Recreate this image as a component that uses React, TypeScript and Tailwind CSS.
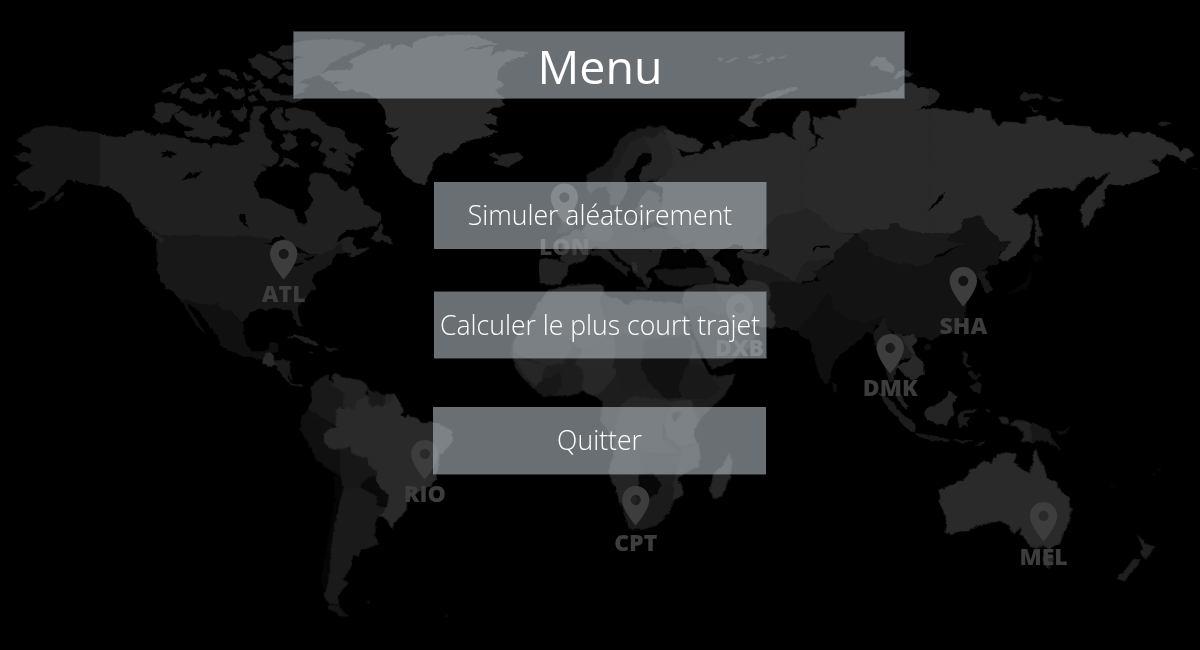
type Shape = [fill: string, points: string];

const THIRD = 'scale(0.33333)';

const northAmerica: Shape[] = [
  ['#181818', '145,315 165,320 190,322 225,330 250,335 275,335 302,342 302,497 275,492 255,490 230,482 222,488 210,478 200,480 185,495 178,510 150,535 130,548 110,560 90,570 85,568 105,555 125,543 140,525 135,515 110,512 90,512 80,500 65,495 55,480 52,468 65,458 75,450 92,445 100,435 85,425 60,422 40,410 55,402 75,398 95,398 92,385 75,378 65,370 50,360 70,352 80,340 100,328 120,322'],
  ['#181818', '163,540 172,527 188,515 184,530 174,542'],
  ['#181818', '42,493 52,492 54,499 44,499'],
  // United States
  ['#181818', '472,640 770,640 795,655 850,665 890,685 920,705 950,705 990,680 1010,668 1025,665 1038,695 1010,700 998,715 995,730 970,745 950,755 940,770 935,780 947,805 930,815 915,835 900,850 890,870 895,890 905,915 898,920 885,900 875,870 860,865 845,868 825,862 800,870 780,865 755,875 735,895 730,910 715,900 705,885 690,872 670,875 650,855 630,858 600,855 560,840 540,838 520,815 500,805 485,785 475,760 472,720 470,690'],
  // Mexico
  ['#101010', '540,838 560,840 600,853 630,856 650,853 670,873 690,870 715,900 730,910 730,945 740,975 755,995 785,995 805,985 812,968 835,968 828,995 810,1000 795,1020 770,1015 740,1012 710,1000 685,990 660,975 655,950 630,920 610,890 595,870 575,858 562,850 570,870 590,900 605,925 614,940 602,932 580,900 560,870 550,855'],
  ['#2a2a2a', '790,1018 797,1000 812,998 820,1010 822,1022 838,1028 828,1038 805,1036 788,1030'],
  ['#1b1b1b', '822,1024 850,1020 872,1026 868,1050 862,1075 880,1090 908,1095 905,1099 880,1096 860,1082 845,1062 828,1038'],
  // Canada
  ['#202020', '300,342 320,345 345,352 370,350 390,340 410,332 430,328 440,342 460,345 480,340 500,345 530,350 555,355 575,368 600,370 625,368 632,387 640,372 665,370 690,378 715,372 745,362 735,350 745,335 760,330 750,310 755,285 760,260 790,258 800,268 785,280 775,300 790,315 788,335 800,345 806,360 820,365 812,385 830,402 838,412 828,428 812,440 775,432 800,442 795,450 775,465 762,485 762,505 775,520 785,535 810,538 830,550 850,560 880,570 888,590 895,610 910,617 922,605 920,590 912,575 928,562 940,545 940,530 925,512 925,500 932,485 930,465 945,458 970,462 990,470 1005,482 1015,505 1035,518 1050,505 1062,497 1075,515 1085,535 1092,550 1120,572 1140,580 1146,600 1130,615 1100,622 1070,630 1040,632 1020,645 1005,665 1025,660 1045,650 1062,655 1055,670 1070,685 1085,688 1060,700 1040,698 1030,690 1025,668 1008,672 995,690 960,702 930,702 900,685 870,670 820,660 780,650 750,647 485,647 470,637 440,620 425,605 405,585 395,560 375,535 360,520 345,510 325,500 300,495'],
  ['#202020', '432,622 452,627 472,642 490,660 486,670 468,655 450,635'],
  ['#202020', '1115,655 1128,635 1143,612 1149,622 1143,640 1165,650 1170,657 1178,672 1165,670 1150,662 1130,665'],
  ['#202020', '1048,708 1065,690 1105,683 1085,698 1060,713'],
  // Arctic islands
  ['#202020', '465,250 485,250 515,250 550,262 540,272 520,282 505,305 485,310 470,300 456,290 470,275'],
  ['#202020', '525,285 550,272 570,285 590,290 605,280 610,297 622,290 628,268 636,300 655,268 662,290 648,305 662,320 697,332 690,345 660,350 640,350 620,358 590,352 560,347 548,335 590,325 560,318 535,308'],
  ['#202020', '545,215 560,205 580,222 605,225 620,220 612,203 630,210 645,225 655,220 652,235 620,236 605,248 580,245 565,235 540,235'],
  ['#202020', '485,213 510,200 530,190 552,190 540,202 528,215 518,222 505,212 488,220'],
  ['#202020', '570,178 590,168 612,163 618,170 600,188 580,185'],
  ['#202020', '655,150 675,148 692,152 710,165 715,180 695,175 680,165 660,162'],
  ['#202020', '670,205 690,200 710,212 730,205 735,230 720,238 700,228 680,216'],
  ['#202020', '745,118 762,115 775,100 800,110 825,125 845,145 835,160 815,175 790,165 770,145 755,137'],
  ['#202020', '803,95 830,93 845,80 860,77 885,77 885,115 860,118 835,115 812,108'],
  ['#202020', '775,205 810,208 820,218 850,225 880,230 912,236 900,245 860,243 800,240 785,228'],
  ['#202020', '728,160 750,165 762,175 745,182 735,175'],
  ['#202020', '745,205 765,208 772,195 755,190 780,180 790,192 775,210 750,215'],
  ['#202020', '745,230 762,228 775,238 760,244 745,240'],
  ['#202020', '835,170 850,158 865,170 882,165 882,198 865,195 860,185 840,190'],
  ['#202020', '840,130 862,125 884,132 884,150 865,148'],
  ['#202020', '695,268 715,276 730,256 742,270 735,290 728,305 705,296 705,283 695,278'],
  ['#202020', '752,300 770,305 790,320 788,345 768,340 750,330'],
  ['#202020', '720,345 740,335 755,350 745,365 725,358'],
  // Baffin Island
  ['#202020', '810,290 825,265 848,262 843,285 855,303 872,302 855,288 858,268 890,262 925,272 945,278 950,292 970,305 985,318 1020,328 1035,335 1032,355 1060,368 1078,378 1092,388 1065,400 1066,415 1040,400 1032,397 1045,415 1062,432 1058,440 1035,425 1035,432 1052,450 1050,462 1020,452 1000,447 985,445 970,430 982,405 955,388 968,362 960,345 935,338 925,325 900,322 870,334 840,330 820,312'],
  ['#202020', '850,345 865,338 885,350 890,375 870,392 848,388 842,375 858,365'],
  ['#202020', '838,438 855,410 875,422 900,440 882,442 865,432 845,440'],
  ['#202020', '932,370 948,362 957,372 945,382 935,378'],
  // Ellesmere Island
  ['#202020', '880,70 920,62 990,58 1050,62 1103,72 1070,90 1050,103 1020,115 995,128 970,150 950,170 920,175 890,190 930,192 905,215 880,228 880,122 915,110 880,106'],
  // Greenland
  ['#2a2a2a', '955,165 980,153 1010,152 1055,148 1061,135 1045,122 1090,103 1110,90 1150,78 1175,72 1170,97 1190,76 1215,75 1240,88 1238,70 1260,58 1310,50 1370,45 1430,47 1450,58 1490,70 1450,76 1410,83 1380,93 1440,85 1482,80 1470,110 1500,95 1540,92 1585,97 1560,110 1530,120 1515,130 1495,150 1490,180 1512,195 1490,205 1485,215 1515,235 1500,240 1514,250 1495,262 1480,262 1457,280 1490,290 1492,318 1470,308 1450,312 1465,325 1494,335 1450,352 1420,358 1390,365 1365,395 1330,400 1305,415 1297,440 1285,460 1275,492 1250,488 1225,478 1205,455 1185,425 1172,400 1172,380 1185,365 1200,348 1180,352 1160,340 1185,335 1200,322 1170,322 1155,310 1160,295 1155,270 1140,245 1125,235 1100,218 1060,210 1020,212 1000,192 1045,188 985,183'],
  ['#232323', '1468,405 1485,397 1498,410 1520,403 1555,398 1570,412 1555,425 1520,440 1497,434 1483,428 1498,420'],
  // Caribbean
  ['#202020', '863,954 885,945 910,950 935,963 956,973 950,977 925,969 900,957 880,953'],
  ['#191919', '975,980 990,982 1016,988 985,992'],
  ['#191919', '927,996 940,997 936,1000'],
];

const northAmericaWater: string[] = [
  '718,582 735,585 740,610 747,628 732,612 718,600',
  '480,398 497,396 503,388 512,396 530,397 518,405 512,415 500,408 484,413 490,403',
  '545,480 560,468 568,455 580,463 612,452 590,468 572,476',
  '788,670 808,665 825,652 845,650 852,660 830,665 812,675',
  '878,735 905,725 910,730 888,740',
  '912,715 945,708 940,716 915,720',
  '988,388 998,382 1012,390 1002,400',
  '885,680 900,690 908,700 890,698',
  '360,520 375,540 392,565 412,600 402,590 380,560',
];

const southAmerica: Shape[] = [
  ['#191919', '95,80 120,55 145,45 150,65 165,70 192,85 192,145 172,150 167,197 130,177 83,152 95,120'],
  ['#222222', '145,45 148,65 158,68 158,48 170,40 182,52 210,56 245,62 265,80 255,100 272,118 268,132 232,132 225,147 193,147 190,95 155,78 148,62'],
  ['#1a1a1a', '260,84 285,98 318,103 318,135 275,142'],
  ['#242424', '318,102 342,104 355,122 340,138 315,136'],
  ['#101010', '68,170 83,150 128,175 110,190 75,198 64,190'],
  ['#101010', '60,205 72,190 110,190 130,175 168,197 150,205 130,230 140,255 175,268 182,300 177,347 150,330 112,303 95,265'],
  ['#171717', '178,268 212,260 225,285 257,290 270,320 288,330 290,348 250,365 240,382 190,392 180,340'],
  ['#0a0a0a', '248,365 288,345 297,370 327,405 322,440 288,432 295,405 243,382'],
  ['#060606', '160,345 180,350 190,395 172,430 160,500 150,600 148,670 133,710 125,660 140,560 155,480 165,420'],
  ['#1a1a1a', '190,390 215,382 240,384 292,407 290,435 315,445 297,465 285,490 282,525 297,548 270,563 242,567 235,590 215,588 217,612 205,635 188,655 205,672 185,690 175,710 172,730 145,730 132,705 145,670 150,600 162,500 178,430'],
  ['#151515', '150,733 178,736 180,745 190,757 206,768 180,768 165,755 145,745'],
  ['#2a2a2a', '168,150 180,142 190,150 200,145 225,147 232,120 265,108 275,142 320,135 345,110 360,135 370,150 360,165 375,175 385,165 412,175 425,190 455,188 490,197 515,213 519,240 500,265 478,282 474,320 468,358 455,375 430,385 395,410 380,425 379,450 360,470 345,485 335,506 325,482 297,465 322,440 327,405 302,385 288,362 288,330 265,315 262,292 235,288 215,278 210,260 185,266 160,268 135,250 130,225 148,207 170,202'],
  ['#101010', '260,725 268,722 272,727 262,730'],
  ['#101010', '495,760 507,766 500,770'],
  ['#1b1b1b', '5,0 32,5 28,30 36,60 15,30 0,18'],
];

const africa: Shape[] = [
  ['#1d1d1d', '145,150 155,160 200,140 240,135 300,132 315,140 310,160 330,172 360,180 380,197 400,180 430,180 470,190 520,195 545,190 555,215 565,250 575,290 590,330 610,370 625,400 650,410 705,403 695,430 670,470 630,505 600,540 582,570 590,600 600,640 595,680 560,695 530,715 545,740 545,765 520,785 515,800 495,830 470,855 430,868 395,868 385,855 380,820 360,790 350,750 330,715 325,690 340,650 345,600 325,570 303,545 302,520 310,490 290,470 250,455 220,460 190,467 160,465 130,468 95,440 65,410 45,380 38,350 40,310 60,270 100,220 110,195 130,180'],
  ['#2a2a2a', '110,195 145,152 200,140 300,132 312,150 300,170 318,250 335,280 290,310 250,330 200,300 150,250 100,220'],
  ['#272727', '100,220 150,250 200,300 215,320 190,370 140,375 60,345 40,340 40,310 60,270'],
  ['#232323', '310,165 360,180 385,197 430,182 430,300 335,280 318,250'],
  ['#282828', '250,330 290,310 335,282 350,300 345,350 335,385 245,388 225,370'],
  ['#222222', '430,182 545,192 550,215 535,210 560,280 430,280'],
  ['#1c1c1c', '350,285 430,290 425,380 440,430 390,470 355,420 345,350'],
  ['#262626', '45,355 140,375 125,410 130,440 105,435 75,410'],
  ['#171717', '130,420 180,400 185,440 160,465 130,468 105,445'],
  ['#272727', '247,392 270,383 345,385 352,405 325,430 305,455 285,468 250,453'],
  ['#111111', '430,300 570,285 575,330 560,380 535,440 545,470 500,475 450,430 425,385'],
  ['#191919', '560,380 590,372 620,400 660,445 620,475 560,475 538,440'],
  ['#262626', '365,490 400,470 450,475 510,480 520,510 495,550 495,600 540,640 480,640 445,640 400,630 350,600 345,560'],
  ['#242424', '345,600 400,610 445,640 435,700 330,700 325,690 340,650'],
  ['#2a2a2a', '515,485 570,480 595,540 580,570 592,610 540,620 500,590 495,550'],
  ['#202020', '420,650 480,645 535,640 530,690 480,710 430,690'],
  ['#262626', '545,625 595,615 600,650 595,682 560,695 530,715 545,740 545,765 522,780 520,730 530,690'],
  ['#242424', '330,702 420,702 415,770 400,800 375,810 360,790 350,750'],
  ['#080808', '418,705 460,700 485,735 470,760 440,775 412,765'],
  ['#1b1b1b', '360,790 410,800 440,775 475,765 500,740 522,745 515,800 495,830 470,855 430,868 395,868 385,855'],
  ['#262626', '690,640 697,668 687,720 665,768 640,775 630,745 642,700 665,682'],
  ['#101010', '515,522 540,515 538,530 522,547'],
  ['#181818', '488,560 492,545 496,590 492,600'],
  // Arabian peninsula and Iran
  ['#252525', '555,150 590,135 640,130 665,180 700,205 690,240 640,225 590,205 560,220 548,190'],
  ['#1d1d1d', '560,205 600,198 640,218 690,235 710,255 740,268 765,285 755,320 700,360 637,388 620,360 600,320 575,265'],
  ['#2a2a2a', '640,130 680,135 710,128 760,122 800,130 812,165 802,200 825,235 820,260 785,262 750,245 720,230 700,205 665,180'],
];

const europe: Shape[] = [
  ['#1a1a1a', '675,440 845,430 845,610 790,600 740,545 690,520 680,500 668,475'],
  ['#222222', '58,450 80,444 120,452 150,460 142,488 120,520 90,526 62,520 58,490'],
  ['#222222', '150,464 120,445 128,405 110,388 140,380 165,358 195,365 222,390 215,425 190,455'],
  ['#101010', '105,372 112,355 125,345 118,310 130,290 148,320 162,352 140,368'],
  ['#2a2a2a', '185,365 205,335 225,325 265,335 290,370 262,400 220,395'],
  ['#1f1f1f', '265,330 330,325 370,335 365,375 300,385 280,365'],
  ['#1f1f1f', '222,395 262,398 290,368 300,385 365,372 380,390 390,420 330,415 300,425 260,415 215,410'],
  ['#1c1c1c', '210,425 260,412 272,435 300,458 332,478 320,483 322,498 305,485 270,457 240,438 215,440'],
  ['#1f1f1f', '275,415 330,408 400,425 440,415 425,455 408,470 385,478 378,495 398,512 382,532 355,500 335,470 300,445'],
  ['#2c2c2c', '335,460 348,458 352,485 340,488'],
  ['#232323', '340,380 400,350 470,360 560,385 540,405 500,415 470,412 440,425 400,425 375,400'],
  ['#1b1b1b', '200,195 240,172 270,152 285,120 300,88 330,68 360,55 400,50 440,50 450,62 400,85 370,78 330,100 300,150 275,200 262,228 235,236 212,248 202,238'],
  ['#202020', '300,150 330,98 370,78 395,130 370,128 350,145 342,170 320,185 316,215 325,228 312,262 290,288 275,280 262,235 275,200'],
  ['#252525', '370,78 400,85 425,60 450,90 455,130 465,160 435,195 385,216 358,214 365,180 395,150 395,130'],
  ['#202020', '365,262 385,240 415,250 425,300 400,340 365,330 345,300'],
  // European Russia
  ['#2a2a2a', '432,58 480,74 520,85 552,105 540,124 500,126 465,113 490,140 495,155 515,165 522,150 548,145 555,128 590,122 580,98 598,92 606,114 640,105 680,92 730,88 770,70 805,75 842,100 842,420 770,400 728,412 700,425 600,420 560,452 535,425 490,400 450,370 420,320 430,235 400,215 435,195 460,160 450,100'],
  ['#161616', '405,482 440,475 480,478 530,470 575,473 592,500 570,520 520,522 480,530 440,522 415,505'],
  ['#232323', '545,440 575,445 612,470 632,492 625,515 590,510 580,475 555,462'],
  ['#1a1a1a', '90,538 98,538 98,545 90,545'],
  ['#181818', '350,530 380,535 378,540 352,537'],
];

const europeWater: string[] = [
  '415,455 432,420 470,410 478,418 500,430 515,418 540,430 558,452 552,474 510,472 470,468 430,476',
  '608,422 640,405 668,408 672,418 648,430 668,452 655,470 665,490 680,510 672,524 650,528 630,515 632,490 615,462',
  '728,428 746,416 748,434 735,440',
  '316,218 318,188 343,172 352,140 370,129 392,134 396,148 372,166 358,182 360,216 340,222',
  '612,80 635,72 640,85 618,88',
];

const crimea = '478,410 500,404 528,400 512,418 496,428';

const siberia: Shape[] = [
  ['#2a2a2a', '-60,380 0,372 30,358 60,358 75,348 130,330 150,338 170,330 205,325 212,310 250,312 292,335 275,300 280,285 300,250 320,242 332,270 325,300 345,320 345,345 320,368 350,350 355,325 375,325 385,345 372,322 345,310 340,260 352,262 370,275 382,285 362,265 385,255 425,270 410,242 470,235 470,205 540,190 592,180 610,165 632,155 655,175 700,178 720,195 705,215 645,242 720,234 750,240 790,245 820,250 845,235 845,610 -60,610'],
  ['#2a2a2a', '115,270 140,245 165,208 210,190 285,170 290,178 230,202 190,215 160,245 155,270 178,290 150,290'],
  ['#2a2a2a', '515,95 530,78 555,80 560,95 582,105 580,128 545,120 530,105 515,110'],
  ['#2a2a2a', '582,145 595,125 612,118 638,130 630,140 605,138'],
  ['#232323', '52,86 72,85 60,92'],
  ['#232323', '75,98 95,84 115,82 95,95'],
  ['#232323', '145,80 188,70 170,84 150,85'],
  ['#232323', '162,97 190,95 178,102'],
  ['#232323', '198,88 220,78 225,88 205,92'],
  ['#232323', '232,82 255,76 245,86'],
  ['#232323', '85,318 98,316 95,326'],
];

const farEast: Shape[] = [
  ['#2a2a2a', '-3,115 40,122 70,120 85,130 130,130 135,118 180,122 185,145 205,170 222,155 285,160 292,142 345,138 350,155 380,148 400,162 440,168 480,170 495,190 550,195 570,190 595,207 605,186 660,190 700,208 740,232 750,247 762,238 780,240 792,255 770,265 765,278 745,262 710,250 690,272 658,268 685,290 688,305 650,320 600,342 560,345 540,342 520,360 525,385 515,390 520,405 500,415 480,455 463,473 453,430 455,400 485,372 510,345 540,310 525,310 500,330 490,318 465,322 440,348 430,360 400,350 320,357 290,380 248,420 270,437 290,430 307,450 300,500 270,540 235,573 205,565 240,515 205,515 200,500 165,470 150,440 100,450 75,490 30,490 -3,540'],
  ['#252525', '314,435 324,440 326,465 336,495 324,500 328,530 316,532 316,480'],
  ['#252525', '-3,58 20,62 30,75 15,92 -3,98'],
  ['#1f1f1f', '270,80 285,67 305,72 340,78 335,88 305,85 285,95 272,88'],
  ['#1f1f1f', '358,80 375,85 402,90 385,95 368,92'],
  ['#1f1f1f', '300,110 310,118 328,120 322,126 308,122'],
  ['#1f1f1f', '684,163 700,158 720,163 700,168'],
  ['#070707', '310,555 325,550 340,568 320,572 308,570'],
  ['#070707', '302,600 305,630 290,655 260,665 225,675 255,655 285,640'],
  ['#101010', '785,294 803,296 795,300'],
];

const asia: Shape[] = [
  // Kazakhstan and its neighbours
  ['#242424', '-50,150 20,165 40,140 20,120 55,75 90,45 130,40 165,25 205,45 240,85 290,105 322,105 300,130 260,160 255,175 200,195 160,190 130,248 100,225 40,205 -30,180'],
  ['#1a1a1a', '-15,180 20,190 60,205 100,225 130,245 100,262 50,250 0,238 -20,220'],
  ['#1e1e1e', '160,192 200,182 255,176 205,208 190,240 135,246'],
  ['#2a2a2a', '-50,240 0,240 45,248 60,270 52,310 78,345 70,382 -10,372 -50,350'],
  ['#131313', '50,250 100,245 130,250 180,248 225,238 242,282 215,310 205,340 150,395 115,380 68,382 78,350 55,310'],
  ['#0f0f0f', '242,278 250,325 300,360 345,368 400,342 402,358 375,375 370,400 350,395 330,418 290,448 255,480 240,520 235,548 225,553 205,515 190,460 180,418 158,415 140,388 190,340 215,300'],
  ['#101010', '248,548 258,552 262,572 252,578'],
  ['#131313', '190,215 250,190 255,160 285,130 320,105 350,120 350,148 430,187 505,198 560,172 595,160 640,128 595,122 600,105 635,90 640,58 690,50 715,90 745,115 750,130 778,122 765,150 745,160 742,188 715,200 690,218 705,230 690,230 660,250 650,300 645,345 628,382 590,402 560,410 545,422 530,412 500,412 470,405 440,402 410,382 402,345 345,368 300,360 250,325 242,282 215,250'],
  ['#1a1a1a', '320,105 350,88 415,90 420,72 435,70 470,92 540,102 600,100 592,122 640,130 560,165 545,187 510,198 430,187 355,157 350,130'],
  ['#191919', '682,220 712,212 703,232 715,245 725,268 710,280 700,262'],
  ['#191919', '370,400 385,380 405,352 410,385 430,402 440,470 420,520 430,545 418,545 400,480 375,440'],
  ['#1e1e1e', '430,405 455,402 480,450 495,470 450,480 440,505 430,540 420,520'],
  ['#282828', '455,410 490,403 502,420 485,440 500,470 522,490 523,525 490,540 462,525 440,500 480,480 490,465 465,430'],
  ['#222222', '436,570 455,585 472,620 466,626 445,602'],
  ['#1d1d1d', '385,578 410,590 445,630 480,660 495,672 490,697 465,680 430,640 402,605'],
  ['#181818', '495,700 520,703 560,710 600,720 595,726 550,720 510,712'],
  ['#181818', '608,722 630,720 668,722 640,728'],
  ['#181818', '672,738 705,720 695,735'],
  ['#242424', '523,632 548,620 575,605 600,575 622,590 605,612 612,640 595,660 590,676 560,672 535,662 525,645'],
  ['#1b1b1b', '625,645 640,632 680,628 670,638 645,640 642,655 660,655 648,665 655,680 640,670 630,684 622,665'],
  ['#181818', '638,458 652,460 650,485 665,500 650,502 640,482'],
  ['#181818', '672,575 660,560 680,545 694,550 690,580'],
  ['#151515', '655,515 668,512 675,530 690,520 680,540 665,535'],
  ['#181818', '708,625 718,632 714,642'],
  ['#101010', '522,440 540,432 542,445 528,452'],
  ['#0c0c0c', '640,380 650,392 645,408 638,395'],
];

const oceania: Shape[] = [
  ['#2a2a2a', '240,300 275,285 310,270 325,255 328,240 345,235 370,212 395,223 400,205 415,195 435,187 468,195 460,217 485,238 510,250 518,225 522,185 528,180 538,212 550,225 560,262 590,282 600,298 625,325 633,360 628,395 612,422 600,460 570,474 545,468 520,472 502,462 495,438 480,430 482,412 462,432 445,402 410,393 350,408 320,422 290,425 275,434 257,428 262,400 245,350 237,320'],
  ['#2a2a2a', '548,502 580,500 578,520 565,536 553,522'],
  ['#222222', '415,82 435,78 445,88 445,102 430,100'],
  ['#222222', '450,102 480,90 515,98 515,158 485,150 492,125 470,112'],
  ['#181818', '515,98 545,110 572,128 580,155 602,176 570,160 545,150 515,160'],
  ['#101010', '588,128 615,122 628,110 620,128 600,134'],
  ['#202020', '833,434 845,448 855,462 885,470 872,488 857,508 843,490 850,478'],
  ['#202020', '820,508 840,508 832,528 808,552 795,572 768,565 795,542'],
  ['#101010', '878,250 886,250 884,258'],
  ['#101010', '890,240 900,237 896,243'],
  ['#080808', '752,284 765,290 758,292'],
];

const airports = [
  { code: 'ATL', x: 283.7, top: 240, baseline: 302 },
  { code: 'LON', x: 564.4, top: 183.5, baseline: 254.7 },
  { code: 'DXB', x: 739.6, top: 294, baseline: 355.8 },
  { code: 'SHA', x: 963.3, top: 267, baseline: 334 },
  { code: 'DMK', x: 890.3, top: 334, baseline: 396 },
  { code: 'RIO', x: 424.8, top: 440, baseline: 502 },
  { code: 'CPT', x: 635.7, top: 486, baseline: 551 },
  { code: 'MEL', x: 1043.6, top: 502, baseline: 564.8 },
];

function Region({ x, y, shapes, water = [] }: { x: number; y: number; shapes: Shape[]; water?: string[] }) {
  return (
    <g transform={`translate(${x} ${y}) ${THIRD}`} strokeLinejoin="round" strokeWidth="2">
      {shapes.map(([fill, points], i) => (
        <polygon key={i} fill={fill} stroke={fill} points={points} />
      ))}
      {water.map((points, i) => (
        <polygon key={i} fill="#020202" points={points} />
      ))}
    </g>
  );
}

function WorldMap() {
  return (
    <svg className="absolute inset-0 h-[650px] w-[1200px]" viewBox="0 0 1200 650" aria-hidden="true">
      <defs>
        <filter id="coast" x="0" y="0" width="1200" height="650" filterUnits="userSpaceOnUse" colorInterpolationFilters="sRGB">
          <feTurbulence type="fractalNoise" baseFrequency="0.15" numOctaves="2" seed="4" result="noise" />
          <feDisplacementMap in="SourceGraphic" in2="noise" scale="4" xChannelSelector="R" yChannelSelector="G" />
          <feGaussianBlur stdDeviation="0.65" />
        </filter>
      </defs>
      <g filter="url(#coast)">
        <Region x={0} y={20} shapes={northAmerica} water={northAmericaWater} />
        <Region x={280} y={360} shapes={southAmerica} />
        <Region x={700} y={30} shapes={siberia} />
        <Region x={930} y={70} shapes={farEast} />
        <Region x={520} y={110} shapes={europe} />
        <Region x={750} y={200} shapes={asia} />
        <Region x={500} y={240} shapes={africa} />
        <Region x={520} y={110} shapes={[]} water={europeWater} />
        <Region x={520} y={110} shapes={[['#242424', crimea]]} />
        <Region x={860} y={390} shapes={oceania} />
        <polygon fill="#020202" points="945,191.5 943,198 933,207 926,211 935,203 940,196" />
        <polyline fill="none" stroke="#020202" strokeWidth="2" points="813,252 816,247 829,246.500" />
      </g>
      {airports.map(({ code, x, top, baseline }) => (
        <g key={code} fill="#3d3d3d">
          <path
            fillRule="evenodd"
            transform={`translate(${x} ${top}) scale(1.95 1.98) translate(-12 -2)`}
            d="M12 2C8.130 2 5 5.130 5 9c0 5.250 7 13 7 13s7-7.750 7-13c0-3.870-3.130-7-7-7zM12 6.400a2.600 2.600 0 1 1 0 5.200 2.600 2.600 0 0 1 0-5.200z"
          />
          <text x={x} y={baseline} textAnchor="middle" className="font-['Open_Sans',sans-serif] text-[23px] font-extrabold">
            {code}
          </text>
        </g>
      ))}
    </svg>
  );
}

function MenuButton({ label, className }: { label: string; className: string }) {
  return (
    <button
      type="button"
      className={`flex w-[333px] items-center justify-center whitespace-nowrap border-[rgba(193,202,209,0.25)] bg-[rgba(193,202,209,0.55)] bg-clip-padding text-[26.6px] leading-none font-light text-white ${className}`}
    >
      {label}
    </button>
  );
}

export default function App() {
  return (
    <div className="relative h-[650px] w-[1200px] overflow-hidden bg-black font-['Open_Sans',sans-serif]">
      <WorldMap />
      <main className="relative flex flex-col items-start pt-[31px]">
        <h1 className="ml-[293px] flex h-[68px] w-[612px] items-center justify-center border border-[rgba(193,202,209,0.3)] bg-[rgba(193,202,209,0.55)] bg-clip-padding pt-[2px] pl-[2px] text-[46.5px] leading-none font-normal text-white">
          Menu
        </h1>
        <MenuButton label="Simuler aléatoirement" className="mt-[83px] ml-[434px] h-[67px] border-r pb-px" />
        <MenuButton label="Calculer le plus court trajet" className="mt-[42px] ml-[434px] h-[68px] border-y border-r pt-px" />
        <MenuButton label="Quitter" className="mt-[48px] ml-[433px] h-[68px] border-b pb-px" />
      </main>
    </div>
  );
}
